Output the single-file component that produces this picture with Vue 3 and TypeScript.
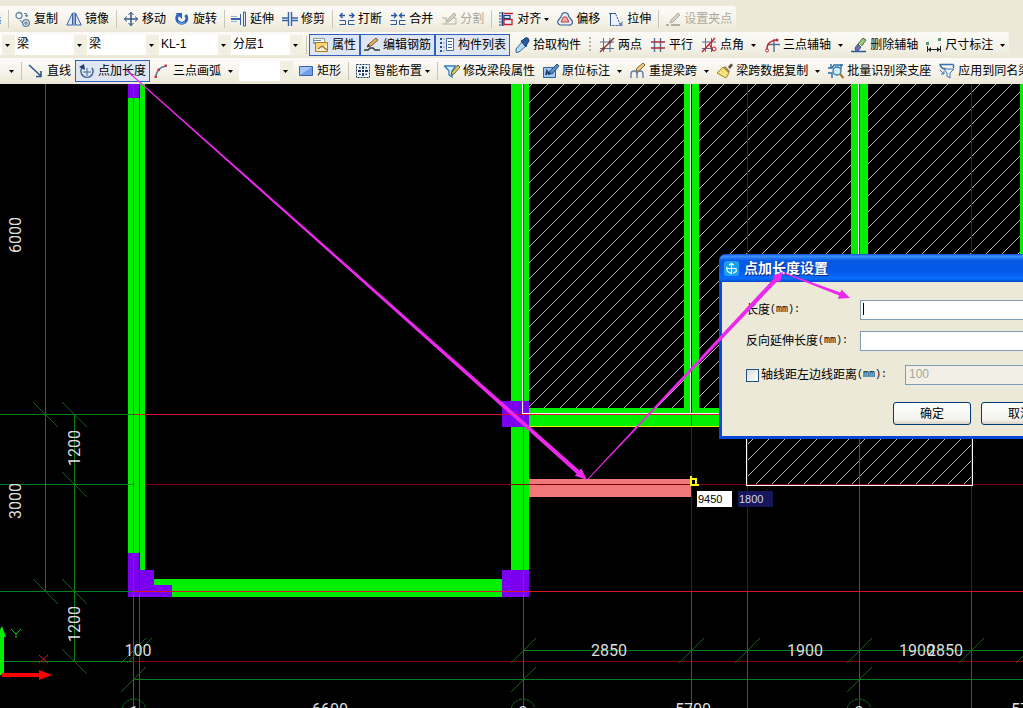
<script setup lang="ts">
import { ref } from 'vue'

type Kind = 'button' | 'select' | 'sep' | 'grip'

interface Tool {
  kind: Kind
  label?: string
  text?: string
  icon?: string
  arrow?: 'near' | 'far'
  on?: boolean
  disabled?: boolean
  size?: string
}

const btn = (text: string, icon: string, more: Partial<Tool> = {}): Tool => ({ kind: 'button', text, icon, ...more })
const sel = (label: string, text: string, size = 'wide'): Tool => ({ kind: 'select', label, text, size })
const sep: Tool = { kind: 'sep' }

const editBar: Tool[] = [
  { kind: 'button', text: '选', size: 'cut' }, sep,
  btn('复制', 'copy'), btn('镜像', 'mirror'), sep,
  btn('移动', 'move'), btn('旋转', 'rotate'), sep,
  btn('延伸', 'extend'), btn('修剪', 'trim'), sep,
  btn('打断', 'split'), btn('合并', 'merge'), btn('分割', 'divide', { disabled: true }), sep,
  btn('对齐', 'align', { arrow: 'near' }), btn('偏移', 'offset'), btn('拉伸', 'stretch'), sep,
  btn('设置夹点', 'grips', { disabled: true }),
]

const memberBar: Tool[] = [
  sel('楼层', '', 'stub'), sel('构件类型', '梁'), sel('构件类别', '梁'), sel('构件名称', 'KL-1'), sel('分层', '分层1'), sep,
  btn('属性', 'props', { on: true }), btn('编辑钢筋', 'rebar', { on: true }), btn('构件列表', 'list', { on: true }),
  btn('拾取构件', 'picker'), { kind: 'grip' },
  btn('两点', 'twoPoint'), btn('平行', 'parallel'), btn('点角', 'angle', { arrow: 'far' }),
  btn('三点辅轴', 'arcAxis', { arrow: 'far' }), btn('删除辅轴', 'eraser'), btn('尺寸标注', 'dimension', { arrow: 'far' }),
]

const drawBar: Tool[] = [
  { kind: 'button', text: '', arrow: 'far', size: 'menu' }, sep,
  btn('直线', 'line'), btn('点加长度', 'pointLen', { on: true }), btn('三点画弧', 'arc', { arrow: 'far' }),
  sel('画弧方式', '', 'mid'), btn('矩形', 'rect'), sep,
  btn('智能布置', 'smart', { arrow: 'near' }), sep,
  btn('修改梁段属性', 'funnelPen'), btn('原位标注', 'note', { arrow: 'far' }), btn('重提梁跨', 'span', { arrow: 'far' }),
  btn('梁跨数据复制', 'brush', { arrow: 'far' }), btn('批量识别梁支座', 'find'), btn('应用到同名梁', 'apply'),
]

const bars = [
  { name: '修改', cls: 'edit', tools: editBar },
  { name: '构件', cls: 'member', tools: memberBar },
  { name: '绘图', cls: 'draw', tools: drawBar },
]

const icons: Record<string, string> = {
  copy: '<g fill="#fff" stroke="#6080a0" stroke-width="1.3"><circle cx="4" cy="4.500" r="3"/><circle cx="11" cy="12" r="3.300"/><circle cx="11" cy="12" r="1.200"/></g><path d="M9 2.500h2.500v3M13 4l-1.500 2L10 4M5 9l3 4" fill="none" stroke="#6080a0"/>',
  mirror: '<path d="M6.500 2v12H.800zM9.500 2v12h5.700z" fill="#dfe9f8" stroke="#3a64a8"/><path d="M8 1v14" stroke="#3a64a8"/>',
  move: '<path d="M8 1.500v13M1.500 8h13" stroke="#36598c" stroke-width="1.500"/><path d="M5.500 4L8 1.200 10.500 4M5.500 12L8 14.800 10.500 12M4 5.500L1.200 8 4 10.500M12 5.500L14.800 8 12 10.500" fill="none" stroke="#36598c"/>',
  rotate: '<path d="M4 4a5 5 0 1 0 7.500 0" fill="none" stroke="#2c65b8" stroke-width="3"/><path d="M1.500 2H8v6z" fill="#2c65b8"/><path d="M4 11a5 5 0 0 0 7 0" fill="none" stroke="#8bb5e8"/>',
  extend: '<path d="M0 8h9" stroke="#3a64a8" stroke-width="2"/><path d="M9.500 3v11M12.500 1v14h2V1z" stroke="#3a64a8" fill="#dfe9f8"/><path d="M0 5.500h6M0 10.500h6" stroke="#9ab4d8"/>',
  trim: '<path d="M0 7h6M10 7h6M0 9.500h6M10 9.500h6" stroke="#3a64a8" stroke-width="1.300"/><path d="M6.500 1v14M9.500 1v14" stroke="#3a64a8" stroke-width="1.400"/>',
  split: '<path d="M1 4.500h5M10 4.500h5M3.500 2L1 4.500 3.500 7M12.500 2L15 4.500 12.500 7" stroke="#28599c" fill="none" stroke-width="1.300"/><path d="M.500 9.500h6v4h-6M15.500 9.500h-6v4h6" fill="none" stroke="#28599c"/>',
  merge: '<path d="M1 4.500h5M10 4.500h5M4 2l2.500 2.500L4 7M12 2L9.500 4.500 12 7" stroke="#28599c" fill="none" stroke-width="1.300"/><path d="M.500 9.500h6v4h-6M15.500 9.500h-6v4h6" fill="none" stroke="#28599c"/>',
  divide: '<path d="M1 7h5M1 13h14V7h-3M5 7v6" fill="none" stroke="#b4b3a8"/><path d="M6 11l1-3 6-6 2 2-6 6z" fill="#d4d3c8" stroke="#b0afa4"/>',
  align: '<path d="M6 2.500h9M6 13.500h8V8.500H6z" stroke="#c02030" stroke-width="1.300" fill="#fff"/><path d="M4.500 1v14" stroke="#203c80" stroke-width="1.800"/><path d="M6 4.500h6v3H6z" fill="#d4e2f8" stroke="#203c80" stroke-width="1.200"/><path d="M1 2h2M1 5h2M1 8h2M1 11h2M1 14h2" stroke="#203c80"/>',
  offset: '<path d="M5 3a4 4 0 0 1 6 0l1 3 2.500 3a3 3 0 0 1-3 5H4a3 3 0 0 1-2.500-5L4 6z" fill="#e8eef8" stroke="#37639c" stroke-width="1.200"/><path d="M6.500 6h3l2.500 5H4z" fill="#f6b0a8" stroke="#c03c3c"/>',
  stretch: '<path d="M2.500 14.500v-12h5l5 12z" fill="#edf3fc" stroke="#36598c" stroke-dasharray="2 1"/><path d="M2.500 2v13M1 2.500h7" fill="none" stroke="#36598c"/><path d="M14.500 15H10l4.500-5z" fill="#6187bd"/>',
  grips: '<path d="M1 14h3M6 14h9" stroke="#b0afa4" stroke-width="2"/><path d="M5 12l1-3 7-7 2 2-7 7z" fill="#d4d3c8" stroke="#b0afa4"/>',
  props: '<path d="M.500 1.500h11v5h-11z" fill="#fff" stroke="#8d98a8"/><path d="M1 3.500h7M1 5.500h5" stroke="#7088a8"/><path d="M2.500 5.500h12v9h-12z" fill="#fbd36c" stroke="#b67923"/><path d="M4 12l4-4 3 2 3-3v7H4z" fill="#f5f1df"/><path d="M5 12l4-3 5 4" fill="none" stroke="#a06a28" stroke-width="1.300"/>',
  rebar: '<path d="M0 13h4l2-2h3l2 2h5" fill="none" stroke="#303840" stroke-width="1.400"/><path d="M3 10l2-3 7-6 2 2-7 6z" fill="#e8b868" stroke="#805428"/><path d="M3 10l1-3 2 2z" fill="#332820"/>',
  list: '<path d="M7.500 1.500h7v12h-7z" fill="#fff" stroke="#486c9c"/><path d="M9 4.500h4M9 7.500h4M9 10.500h4" stroke="#486c9c"/><path d="M1 2h2M1 6h2M1 10h2M1 14h2" stroke="#28508c" stroke-width="2"/><path d="M4 2h2M4 6h2M4 10h2M4 14h2" stroke="#8aa4c8"/>',
  picker: '<path d="M8 5l4 4-7 6-3 .500L2 12z" fill="#b5daf5" stroke="#356a9c"/><path d="M7 4l2-1 2-2q4-1 4 3l-2 3-1 3z" fill="#285a9e" stroke="#183e73"/>',
  twoPoint: '<path d="M4.500 1v14M11 1v14M1 5h14M1 11.500h14" stroke="#507094"/><path d="M1 15L15 1" stroke="#883c38" stroke-width="1.500"/><circle cx="4.500" cy="11.500" r="1.500" fill="#883c38"/><circle cx="11" cy="5" r="1.500" fill="#883c38"/>',
  parallel: '<path d="M4.500 1v14M10.500 1v14" stroke="#507094" stroke-width="1.400"/><path d="M1 5h14M1 11h14" stroke="#b02838" stroke-width="1.400"/>',
  angle: '<path d="M4.500 1v14M10.500 1v14M1 5h14M1 11.500h9" stroke="#507094"/><path d="M1 15L14 1M9 8l3 6" stroke="#bc2838" stroke-width="1.500"/><circle cx="13" cy="12" r="2" fill="none" stroke="#bc2838"/>',
  arcAxis: '<path d="M10 2v13M3 7.500h13" stroke="#507094" stroke-width="1.400"/><path d="M3 14Q2 4 13 3" fill="none" stroke="#bc2838" stroke-width="1.500"/><circle cx="3" cy="13.500" r="1.500" fill="#fff" stroke="#bc2838"/><circle cx="13" cy="3" r="1.500" fill="#bc2838"/>',
  eraser: '<path d="M0 14.500h15" stroke="#285c90" stroke-width="1.500"/><path d="M4 11l3-4 3 3-3 4H5z" fill="#6c6fb0" stroke="#474b84"/><path d="M7 7l5-6 3 2-5 7z" fill="#9cc680" stroke="#496d3c"/><path d="M8 7l3 3" stroke="#fff"/>',
  dimension: '<path d="M1.500 9v6M14.500 9v6M2 12.500h12" stroke="#222"/><path d="M5 10l-3 2.500L5 15zM11 10l3 2.500-3 2.500z" fill="#222"/><path d="M0 5h3v3H0zM12 1h3v3h-3z" fill="#559b64"/>',
  line: '<path d="M1 2l12 11M13 8v5.500H8" fill="none" stroke="#285484" stroke-width="1.500"/>',
  pointLen: '<path d="M3 5a6 6 0 1 0 10 0" fill="none" stroke="#456890" stroke-width="1.600"/><path d="M0 4l5-3 1 6z" fill="#213e6c"/><path d="M8 5v8M4 9h8" stroke="#456890"/>',
  arc: '<path d="M2 14Q2 5 12 3" fill="none" stroke="#4c7894" stroke-width="1.300"/><path d="M.500 12.500h2.500v2.500H.500zM3.500 5.500H6V8H3.500zM10.500 1.500H13V4h-2.500z" fill="#c83c4c"/>',
  rect: '<path d="M1.500 3.500h13v9h-13z" fill="#a5c5f7" stroke="#3765b5"/><path d="M2 12l12-8v8z" fill="#719ee8"/>',
  smart: '<path d="M1.500 1.500h13v13h-13z" fill="#edf4ff" stroke="#253a5c" stroke-dasharray="2 1"/><path d="M8 3v3M8 10v3M3 8h3M10 8h3" stroke="#1e3558" stroke-width="1.800"/><path d="M4 4h1.500v1.500H4zM10.500 4H12v1.500h-1.500zM4 10.500h1.500V12H4zM10.500 10.500H12V12h-1.500zM7 7h2v2H7z" fill="#1e3558"/>',
  funnelPen: '<path d="M.500 3h11L8 8v6l-3-2V8z" fill="#d5ebfc" stroke="#347cb8" stroke-width="1.300"/><path d="M7 12l1-3 6-7 2 2-6 7z" fill="#e4cf65" stroke="#625a38"/>',
  note: '<path d="M.500 4.500h12v10h-12z" fill="#a4c7ef" stroke="#2c5f9c"/><path d="M3 12l1-4 2 3 2-1" fill="none" stroke="#183f73" stroke-width="1.800"/><path d="M6 9l8-8 2 2-7 8z" fill="#618fbe" stroke="#234e80"/>',
  span: '<path d="M1 15v-4q0-3 3-3t3 3v4M7 15v-4q0-3 3-3t3 3v4" fill="none" stroke="#667fa8" stroke-width="1.400"/><path d="M6 8l1-3 6-5 2 2-6 6z" fill="#e8c884" stroke="#866637"/>',
  brush: '<path d="M11 4l3-3.500 2 1.500-3 4z" fill="#6b4a31"/><path d="M8 3l5 5-1 2-6-5z" fill="#998a65"/><path d="M6 4l6 6-3 5-9-5z" fill="#f2d967" stroke="#a8872e"/><path d="M3 9l6 4M6 7l4 4" stroke="#fff5b5"/>',
  find: '<path d="M0 5h4l2-3h9M3 1v4M13 1v5M0 10h4v5" fill="none" stroke="#286eaa" stroke-width="1.400"/><circle cx="9" cy="8" r="4" fill="#d3ecfc" stroke="#2e74b0" stroke-width="1.300"/><path d="M12 11l3.500 4" stroke="#a57222" stroke-width="2"/>',
  apply: '<path d="M.500 1.500h14M.500 1.500l3 4h3M14.500 1.500V5" fill="none" stroke="#3b6fae" stroke-width="1.400"/><path d="M5 6h10l-4 4v5l-3-2v-3z" fill="#eef6ff" stroke="#3b6fae"/><path d="M1 7l4 4M5 8v3H2" fill="none" stroke="#3b6fae"/>',
}

const length = ref('')
const reverseLength = ref('')
const axisDistance = ref('100')
const useAxis = ref(false)
const dx = ref('9450')
const dy = ref('1800')

const hatches = [
  [529, 84, 155, 324], [699, 84, 152, 324], [868, 84, 152, 324], [747, 430, 225, 55],
]
const beams = [
  [128, 84, 17, 486], [511, 84, 18, 486], [684, 84, 15, 326], [851, 84, 17, 326], [1020, 84, 30, 326],
  [529, 408, 220, 18], [154, 579, 348, 18],
]
const columns = [
  [128, 84, 11, 14], [128, 553, 12, 44], [139, 570, 15, 27], [154, 585, 18, 12], [502, 401, 27, 26], [502, 570, 27, 27],
]

/** Axis and dimension lines, each one pixel thick. */
interface Rule { x: number; y: number; w: number; h: number; c: string }
const across = (y: number, x1: number, x2: number, c: string): Rule => ({ x: x1, y, w: x2 - x1, h: 1, c })
const down = (x: number, y1: number, y2: number, c: string): Rule => ({ x, y: y1, w: 1, h: y2 - y1, c })
const green = '#088018'
const dark = '#860008'
const red = '#d81424'
const white = '#ffffff'
const far = 2400
const rules: Rule[] = [
  ...[414, 484, 591, 661].map((y) => across(y, 0, 133, green)),
  across(650, 523, far, green), across(679, 133, far, green),
  down(45, 84, 591, green), down(74, 414, 661, green),
  ...[133, 139, 523, 691, 747, 859, 971].map((x) => down(x, 591, 1200, green)),
  across(484, 145, far, dark), across(661, 133, far, dark),
  ...[139, 691, 747, 971].map((x) => down(x, 84, 591, dark)),
  across(414, 133, far, red), across(591, 133, far, red),
  ...[133, 523, 859].map((x) => down(x, 84, 591, red)),
  down(522, 84, 413, white), across(413, 522, 750, white), down(690, 84, 413, white), down(858, 84, 413, white),
  down(746, 430, 485, white), across(485, 746, 973, white), down(972, 430, 485, white),
  across(426, 529, 750, '#f0f000'),
]

const leftTicks = [[45, 414], [74, 414], [74, 484], [45, 591], [74, 591], [74, 661]]
const baseTicks = [
  [133, 650], [139, 650], [523, 650], [691, 650], [747, 650], [859, 650], [971, 650], [1028, 650],
  [133, 679], [523, 679], [859, 679],
]
const bubbles = [{ x: 134, n: '1' }, { x: 523, n: '2' }, { x: 859, n: '3' }]
const sideTexts = [{ x: 15, y: 235, t: '6000' }, { x: 15, y: 501, t: '3000' }, { x: 74, y: 448, t: '1200' }, { x: 74, y: 624, t: '1200' }]
const baseTexts = [
  { x: 138, y: 656, t: '100' }, { x: 609, y: 656, t: '2850' }, { x: 805, y: 656, t: '1900' }, { x: 917, y: 656, t: '1900' },
  { x: 945, y: 656, t: '2850' }, { x: 330, y: 715, t: '6600' }, { x: 693, y: 715, t: '5700' }, { x: 1029, y: 715, t: '5700' },
]

/** Outline of an arrow whose shaft widens from tail to head. */
function taper(x1: number, y1: number, x2: number, y2: number, tail: number, neck: number, head: number, len: number): string {
  const d = Math.hypot(x2 - x1, y2 - y1)
  const ux = (x2 - x1) / d
  const uy = (y2 - y1) / d
  const at = (along: number, side: number) => `${(x1 + ux * along - uy * side).toFixed(1)},${(y1 + uy * along + ux * side).toFixed(1)}`
  return [at(0, tail), at(d - len, neck), at(d - len, head), at(d, 0), at(d - len, -head), at(d - len, -neck), at(0, -tail)].join(' ')
}
const arrows = [
  taper(126, 70, 587, 480, 0.5, 2.2, 5, 12),
  taper(588, 479, 783, 272, 0.5, 2.2, 5, 10),
  taper(784, 273, 850, 298, 0.6, 1.6, 5, 11),
]
</script>

<template>
  <div class="app">
    <header class="bars">
      <div v-for="bar in bars" :key="bar.name" class="bar" :class="bar.cls" role="toolbar" :aria-label="bar.name">
        <template v-for="(t, i) in bar.tools" :key="i">
          <span v-if="t.kind === 'sep'" class="sep"></span>
          <span v-else-if="t.kind === 'grip'" class="grip"></span>
          <span v-else-if="t.kind === 'select'" class="combo" :class="t.size">
            <select :aria-label="t.label"><option>{{ t.text }}</option></select>
            <svg class="caret" viewBox="0 0 5 3"><path d="M0 0h5L2.500 3z" /></svg>
          </span>
          <button v-else type="button" class="tool" :class="[t.size, { on: t.on }]" :disabled="t.disabled" :aria-label="t.text || '更多'">
            <svg v-if="t.icon" class="icon" viewBox="0 0 16 16" v-html="icons[t.icon]"></svg>
            <span v-if="t.text">{{ t.text }}</span>
            <span v-if="t.arrow" class="drop" :class="t.arrow"><svg viewBox="0 0 5 3"><path d="M0 0h5L2.500 3z" /></svg></span>
          </button>
        </template>
      </div>
    </header>

    <main class="canvas">
      <svg class="plan">
        <defs>
          <pattern id="hatch" width="16" height="16" patternUnits="userSpaceOnUse">
            <path d="M-1 9L9 -1M7 17L17 7" stroke="#b8b8b8" stroke-width="1" />
          </pattern>
        </defs>
        <g transform="translate(0 -84)" shape-rendering="crispEdges">
          <rect v-for="(r, i) in hatches" :key="'h' + i" :x="r[0]" :y="r[1]" :width="r[2]" :height="r[3]" fill="url(#hatch)" />
          <rect v-for="(r, i) in beams" :key="'b' + i" :x="r[0]" :y="r[1]" :width="r[2]" :height="r[3]" fill="#00f000" />
          <rect v-for="(r, i) in columns" :key="'c' + i" :x="r[0]" :y="r[1]" :width="r[2]" :height="r[3]" fill="#7c00f0" />
          <rect x="529" y="479" width="162" height="18" fill="#f07878" />
          <rect v-for="(r, i) in rules" :key="'r' + i" :x="r.x" :y="r.y" :width="r.w" :height="r.h" :fill="r.c" />
        </g>
        <g transform="translate(0 -84)">
          <path v-for="(p, i) in leftTicks" :key="'l' + i" :d="`M${p[0] - 12} ${p[1] - 12}l25 25`" stroke="#0b6413" />
          <path v-for="(p, i) in baseTicks" :key="'k' + i" :d="`M${p[0] - 12} ${p[1] + 13}l25 -25`" stroke="#0b6413" />
          <g v-for="b in bubbles" :key="b.x">
            <circle :cx="b.x" cy="711" r="12" fill="none" stroke="#0b7a18" stroke-dasharray="3 1" />
            <text class="dim" :x="b.x" y="718">{{ b.n }}</text>
          </g>
          <text v-for="(s, i) in sideTexts" :key="'s' + i" class="dim" :transform="`translate(${s.x + 6} ${s.y}) rotate(-90)`">{{ s.t }}</text>
          <text v-for="(s, i) in baseTexts" :key="'t' + i" class="dim" :x="s.x" :y="s.y">{{ s.t }}</text>
          <path d="M0 675V636H-3L2 626 6 637H4V675z" fill="#00f000" />
          <path d="M2 673H39V670L52 675 39 680V677H2z" fill="#f00" />
          <path d="M11 629l5 5 5-5M16 634v4" fill="none" stroke="#00c828" />
          <path d="M39 655l9 8M48 655l-9 8" stroke="#c81420" />
          <path d="M691 476v10M690 485h9M692 479h4v6" fill="none" stroke="#ff0" stroke-width="2" />
        </g>
      </svg>

      <div class="coords">
        <input v-model="dx" aria-label="X" />
        <input v-model="dy" class="active" aria-label="Y" />
      </div>

      <section class="dialog" role="dialog" aria-labelledby="dialog-title">
        <h1 id="dialog-title">
          <svg viewBox="0 0 16 16"><rect width="16" height="16" rx="3" fill="#18a0ee" /><path d="M8 2v12M3 8h10M5.500 4.500L8 2.500l2.500 2M3 6v2q0 4 5 5.500M13 8v3l-3 2" fill="none" stroke="#e9fbff" stroke-width="1.300" /></svg>
          点加长度设置
        </h1>
        <form @submit.prevent>
          <div class="field">
            <label for="len">长度<i>(mm):</i></label>
            <span class="box caretbox"><input id="len" v-model="length" /></span>
          </div>
          <div class="field">
            <label for="rev">反向延伸长度<i>(mm):</i></label>
            <span class="box"><input id="rev" v-model="reverseLength" /></span>
          </div>
          <div class="field axis">
            <label for="axis"><input id="axis" v-model="useAxis" type="checkbox" />轴线距左边线距离<i>(mm):</i></label>
            <span class="box"><input v-model="axisDistance" :disabled="!useAxis" aria-label="轴线距左边线距离" /></span>
          </div>
          <div class="actions">
            <button type="submit">确定</button>
            <button type="button">取消</button>
          </div>
        </form>
      </section>
    </main>

    <svg class="marks" aria-hidden="true">
      <polygon v-for="(a, i) in arrows" :key="i" :points="a" fill="#ec28ec" />
    </svg>
  </div>
</template>

<style>
body {
  margin: 0;
  background: #000;
}
</style>

<style scoped>
.app {
  position: relative;
  display: flex;
  flex-direction: column;
  height: 100vh;
  overflow: hidden;
  font: 12px/16px "Liberation Sans", "Noto Sans CJK SC", sans-serif;
  color: #000;
}
button, input, select {
  font: inherit;
  color: inherit;
  box-sizing: border-box;
}
.bars {
  flex: none;
  padding-top: 6px;
  background: #ece9d8;
}
.bar {
  display: flex;
  align-items: center;
  width: max-content;
  height: 26px;
  border-radius: 0 3px 3px 0;
  background: linear-gradient(#fcfbf8, #f4f2e8 60%, #ebe7d7);
}
.tool {
  display: flex;
  flex: none;
  align-items: center;
  gap: 3px;
  height: 22px;
  padding: 0 4px;
  border: 0;
  background: none;
  white-space: nowrap;
}
.tool.on {
  background: #dfe6f3;
  box-shadow: inset 0 0 0 1px #3360bd;
}
.tool:disabled { color: #aca899; }
.tool.cut { margin-left: -15px; }
.tool.menu { padding: 0 4px 0 5px; }
.icon {
  display: block;
  width: 16px;
  height: 16px;
}
.drop {
  display: flex;
  justify-content: flex-end;
  margin-left: -3px;
}
.drop svg, .caret {
  display: block;
  width: 5px;
  height: 3px;
}
.drop.near { width: 8px; }
.drop.far { width: 12px; }
.sep {
  flex: none;
  width: 1px;
  height: 18px;
  margin: 0 2px 0 3px;
  background: #c9c6b8;
}
.grip {
  flex: none;
  width: 2px;
  height: 16px;
  margin: 0 4px;
  background: repeating-linear-gradient(#b8b5a5 0 2px, transparent 2px 4px);
}
.combo {
  position: relative;
  flex: none;
  width: 72px;
  height: 20px;
  background: linear-gradient(90deg, #fff 0 calc(100% - 13px), #f1eee2 calc(100% - 13px));
}
.combo.stub { width: 15px; }
.combo.mid {
  width: 54px;
  margin: 0 1px 0 2px;
}
.combo select {
  width: 100%;
  height: 20px;
  padding: 0 14px 2px 2px;
  border: 0;
  background: none;
  appearance: none;
}
.combo.stub select { padding: 0; }
.caret {
  position: absolute;
  top: 9px;
  right: 5px;
  pointer-events: none;
}
.canvas {
  position: relative;
  flex: 1;
  overflow: hidden;
  background: #000;
}
.plan {
  display: block;
  width: 100%;
  height: 100%;
}
.dim {
  font: 16px Roboto, sans-serif;
  text-anchor: middle;
  fill: #dedede;
}
.coords {
  position: absolute;
  top: 407px;
  left: 697px;
  display: flex;
  gap: 6px;
  font-size: 11px;
}
.coords input {
  width: 35px;
  height: 16px;
  padding: 0 0 1px 1px;
  border: 0;
  background: #fff;
}
.coords .active {
  background: #16165a;
  color: #d4d4f4;
}
.dialog {
  position: absolute;
  top: 170px;
  left: 719px;
  width: 364px;
  box-sizing: border-box;
  border: solid #0848d8;
  border-width: 0 3px 3px;
  border-radius: 7px 7px 0 0;
  background: #0848d8;
}
.dialog h1 {
  display: flex;
  align-items: center;
  gap: 5px;
  height: 28px;
  margin: 0 -3px;
  padding-left: 5px;
  border-radius: 7px 7px 0 0;
  background: linear-gradient(#0a4fd0, #3c92fc 8%, #0858e4 24%, #0458e8 60%, #0a6cfc 88%, #0448c8);
  color: #fff;
  font-size: 14px;
  font-weight: bold;
  text-shadow: 1px 1px #0a2a80;
}
.dialog h1 svg {
  width: 15px;
  height: 15px;
}
form {
  padding: 18px 24px 11px;
  background: #ece9d8;
}
.field {
  display: flex;
  align-items: center;
  height: 20px;
  margin-bottom: 11px;
}
.field label {
  display: flex;
  flex: none;
  align-items: center;
  width: 114px;
  white-space: nowrap;
}
.field i {
  font: 10px/16px "Liberation Mono", monospace;
}
.field.axis { margin: 14px 0 17px; }
.field.axis label { width: 159px; }
.box {
  position: relative;
  flex: 1;
}
.box input {
  display: block;
  width: 100%;
  height: 20px;
  padding: 0 3px 2px;
  border: 1px solid #7f9db9;
  background: #fff;
}
.box input:disabled {
  background: #f2f0e6;
  color: #a9a698;
}
.caretbox::after {
  content: "";
  position: absolute;
  top: 3px;
  left: 3px;
  width: 1px;
  height: 12px;
  background: #000;
}
input[type="checkbox"] {
  width: 13px;
  height: 13px;
  margin: 0 2px 0 0;
  border: 1px solid #1c5180;
  background: linear-gradient(135deg, #dcdcd7, #fff);
  appearance: none;
}
.actions {
  display: flex;
  gap: 10px;
  padding-left: 147px;
}
.actions button {
  width: 78px;
  height: 23px;
  padding: 0;
  flex: none;
  border: 1px solid #003c74;
  border-radius: 3px;
  background: linear-gradient(#fff, #f3f2ec 80%, #d8d0c4);
}
.marks {
  position: absolute;
  inset: 0;
  width: 100%;
  height: 100%;
  pointer-events: none;
}
</style>
